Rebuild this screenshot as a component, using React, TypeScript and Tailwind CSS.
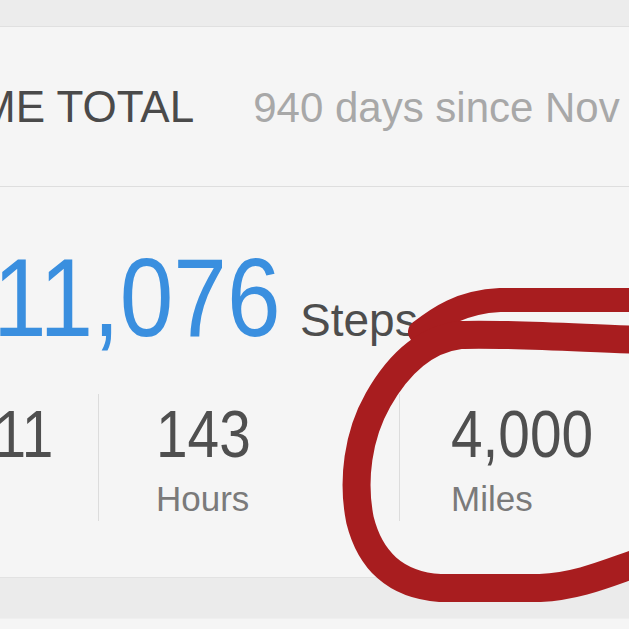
const STATS = [
  { value: "12,311", label: "Days", pad: "pl-[87px]", divider: "" },
  { value: "143", label: "Hours", pad: "pl-[57px]", divider: "border-l border-[#dcdcdc]" },
  { value: "4,000", label: "Miles", pad: "pl-[51px]", divider: "border-l border-[#dcdcdc]" },
];

function Scribble() {
  return (
    <svg
      className="pointer-events-none absolute inset-0"
      width="629"
      height="629"
      viewBox="0 0 629 629"
      fill="none"
    >
      <path
        d="M420 332 C438 318 460 302 500 300 L640 300"
        stroke="#a81d1f"
        strokeWidth="24"
        strokeLinecap="round"
      />
      <path
        d="M640 340 C580 338 500 333 460 335 C420 340 395 370 378 400 C358 435 352 480 360 520 C370 560 395 585 440 588 L540 588 C580 586 610 572 640 562"
        stroke="#a81d1f"
        strokeWidth="28"
        strokeLinecap="round"
        strokeLinejoin="round"
      />
    </svg>
  );
}

export default function App() {
  return (
    <div className="relative flex h-[629px] w-[629px] flex-col overflow-hidden bg-[#ebebeb] font-['Liberation_Sans',Arial,sans-serif]">
      <div className="h-[27px] shrink-0 border-b border-[#e0e0e0] bg-[#ececec]" />

      <section className="shrink-0 bg-[#f5f5f5] pb-[56px]">
        <div className="flex h-[160px] items-center border-b border-[#dedede]">
          <div className="-ml-[153px] flex items-baseline whitespace-nowrap leading-none">
            <span className="text-[44px] text-[#4a4a4a]">LIFETIME TOTAL</span>
            <span className="ml-[59px] text-[42px] text-[#a8a8a8]">940 days since Nov</span>
          </div>
        </div>

        <div className="-ml-[7px] flex items-baseline whitespace-nowrap pt-[55px] leading-none">
          <span className="inline-block w-[295px] text-[112px] text-[#3a8fdf]">
            <span className="inline-block origin-left scale-x-[0.86]">11,076</span>
          </span>
          <span className="ml-[12px] text-[46px] text-[#4d4d4d]">Steps</span>
        </div>

        <div className="-ml-[203px] mt-[40px] flex whitespace-nowrap">
          {STATS.map((s) => (
            <div
              key={s.label}
              className={`w-[301px] shrink-0 pb-[5px] pt-[7px] ${s.pad} ${s.divider}`}
            >
              <div className="text-[66px] leading-none text-[#4f4f4f]">
                <span className="inline-block origin-left scale-x-[0.86]">{s.value}</span>
              </div>
              <div className="mt-[14px] text-[35px] leading-none text-[#7a7a7a]">
                {s.label}
              </div>
            </div>
          ))}
        </div>
      </section>

      <div className="h-[41px] shrink-0 border-t border-[#e2e2e2] bg-[#ebebeb]" />
      <div className="flex-1 border-t border-[#efefef] bg-[#f5f5f5]" />

      <Scribble />
    </div>
  );
}
